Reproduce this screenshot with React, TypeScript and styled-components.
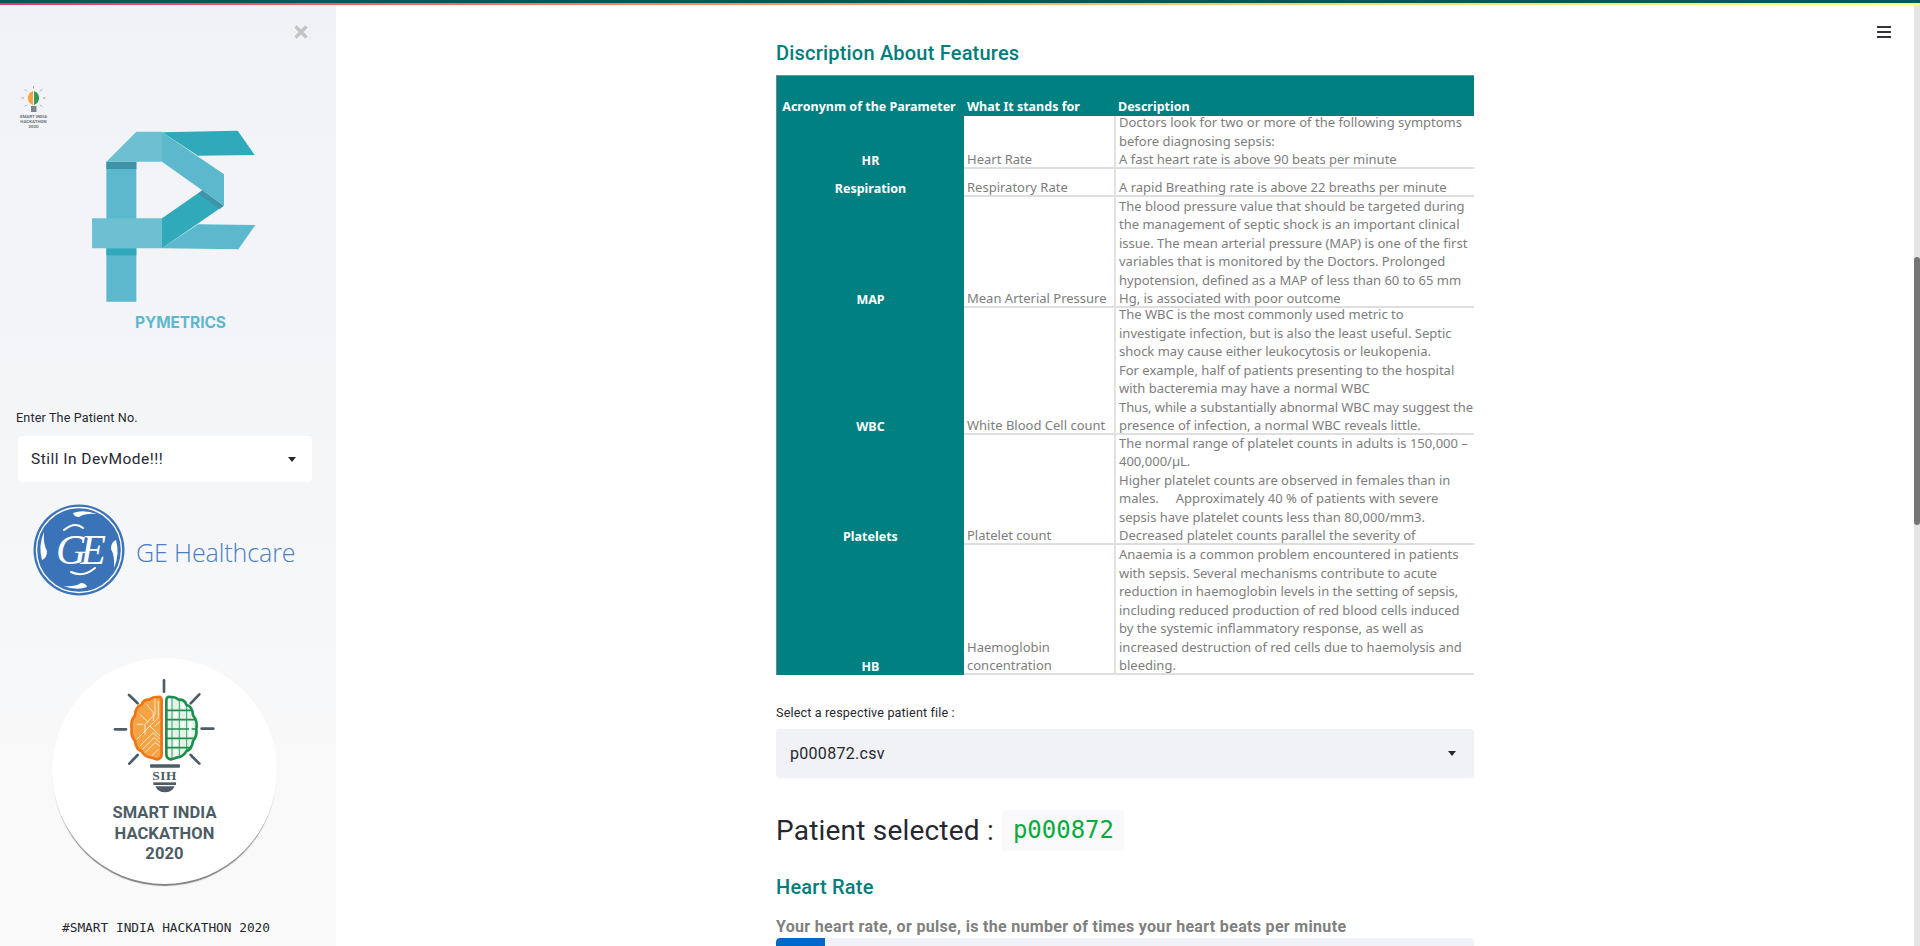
import React from 'react';
import styled, { createGlobalStyle } from 'styled-components';

const GlobalStyle = createGlobalStyle`
    html, body {
        margin:0;
        height:100%;
        overflow:hidden;
        background:#fff;
    }
    * {
        box-sizing:border-box;
    }
`;

const Page = styled.div`
    width:1920px;
    height:946px;
    display:flex;
    flex-direction:column;
    overflow:hidden;
    font-family:Roboto, sans-serif;
    color:#262730;
`;

const TopBand = styled.div`
    height:3px;
    flex:none;
    background:#0b5657;
`;

const Decoration = styled.div`
    height:2px;
    flex:none;
    background:linear-gradient(90deg, #f0306c, #ff8f6b 40%, #ffd37a 70%, #fffd80);
`;

const Body = styled.div`
    flex:1;
    min-height:0;
    display:flex;
`;

const Sidebar = styled.aside`
    position:relative;
    width:336px;
    flex:none;
    padding-top:80px;
    display:flex;
    flex-direction:column;
    background:linear-gradient(180deg, #f0f2f6, #fafafa);
`;

const CloseMark = styled.div`
    position:absolute;
    top:19px;
    right:27px;
    display:flex;
    color:#c4c4c4;
`;

const MiniLogo = styled.svg`
    display:block;
    width:30px;
    height:45px;
    margin-left:19px;
    flex:none;
`;

const BrandMark = styled.svg`
    display:block;
    width:163.4px;
    height:172px;
    margin-left:92px;
    flex:none;
`;

const BrandName = styled.div`
    margin-top:11px;
    padding-left:135px;
    font-family:Inter, sans-serif;
    font-size:15.5px;
    line-height:20px;
    font-weight:700;
    letter-spacing:-0.1px;
    color:#5fb8cc;
`;

const WidgetLabel = styled.div<{ $top?: number }>`
    margin-top:${p => p.$top ?? 0}px;
    font-size:12.6px;
    line-height:16px;
    letter-spacing:0.15px;
`;

const SideLabel = styled(WidgetLabel)`
    padding-left:16px;
`;

const SideSelect = styled.div`
    margin:10px 24px 0 18px;
    height:46px;
    padding:0 16px 0 13px;
    display:flex;
    align-items:center;
    justify-content:space-between;
    background:#fff;
    border-radius:4px;
    font-size:15.5px;
    letter-spacing:0.47px;
`;

const Caret = styled.span`
    width:0;
    height:0;
    border-left:4.5px solid transparent;
    border-right:4.5px solid transparent;
    border-top:5px solid #262730;
`;

const GeLogo = styled.div`
    margin:22px 0 0 33px;
    display:flex;
    align-items:center;
    gap:11px;
`;

const GeSeal = styled.svg`
    display:block;
    width:92px;
    height:92px;
    flex:none;
`;

const GeName = styled.div`
    margin-top:4px;
    font-family:'Open Sans', sans-serif;
    font-weight:300;
    font-size:25px;
    letter-spacing:-0.1px;
    color:#4a7fc1;
    white-space:nowrap;
`;

const HackBadge = styled.div`
    margin:62px 0 0 52px;
    width:225px;
    height:226px;
    padding-top:18px;
    display:flex;
    flex-direction:column;
    align-items:center;
    border-radius:50%;
    background:#fff;
    box-shadow:0 3px 1px -1px #808080;
`;

const BulbMark = styled.svg`
    display:block;
    width:110px;
    height:120px;
    flex:none;
`;

const BadgeText = styled.div`
    margin-top:7px;
    font-size:16.5px;
    line-height:20.5px;
    font-weight:700;
    letter-spacing:0.1px;
    text-align:center;
    color:#4d5c66;
`;

const SideCaption = styled.div`
    margin-top:36px;
    padding-left:62px;
    font-family:'DejaVu Sans Mono', monospace;
    font-size:12.8px;
    line-height:16px;
    white-space:nowrap;
`;

const MainArea = styled.main`
    position:relative;
    flex:1;
    min-width:0;
    overflow:hidden;
    display:flex;
    justify-content:center;
`;

const Burger = styled.div`
    position:absolute;
    top:21px;
    right:23px;
    width:14px;
    display:flex;
    flex-direction:column;
    gap:3px;
    span {
        display:block;
        height:2px;
        background:#33343e;
    }
`;

const Column = styled.div`
    width:698px;
    flex:none;
    padding-top:37px;
`;

const SectionTitle = styled.h3<{ $top?: number }>`
    margin:${p => p.$top ?? 0}px 0 0;
    font-size:20px;
    line-height:23px;
    font-weight:500;
    letter-spacing:0.2px;
    color:#007d7d;
`;

const FeatureTable = styled.div`
    margin-top:10px;
    border-top:1px solid #7f8f8f;
    font-family:'Noto Sans', sans-serif;
    font-size:13px;
    line-height:18.55px;
    color:#7d7d7d;
`;

const TableRow = styled.div<{ $height: number }>`
    height:${p => p.$height}px;
    display:grid;
    grid-template-columns:188px 150px 1fr;
    grid-template-rows:minmax(0, 1fr);
`;

const NameCell = styled.div<{ $head?: boolean }>`
    display:flex;
    align-items:flex-end;
    justify-content:center;
    overflow:hidden;
    padding-right:${p => (p.$head ? 3 : 0)}px;
    background:#008080;
    border-left:1px solid #5f8f8f;
    color:#fff;
    font-weight:700;
    font-size:12.5px;
    line-height:${p => (p.$head ? 18 : 16)}px;
    white-space:nowrap;
`;

const HeadCell = styled.div<{ $wide?: boolean }>`
    display:flex;
    align-items:flex-end;
    background:#008080;
    color:#fff;
    font-weight:700;
    font-size:12.5px;
    line-height:18px;
    padding-left:${p => (p.$wide ? 4 : 3)}px;
`;

const TextCell = styled.div<{ $wide?: boolean }>`
    display:flex;
    flex-direction:column;
    justify-content:flex-end;
    min-height:0;
    padding-left:3px;
    white-space:pre;
    box-shadow:inset 0 -2px #dedede;
    border-left:${p => (p.$wide ? '2px solid #e2e2e2' : 'none')};
`;

const Line = styled.div<{ $tight?: boolean }>`
    flex:none;
    letter-spacing:${p => (p.$tight ? '-0.1px' : 'normal')};
`;

const PlainSelect = styled.div`
    margin-top:8px;
    height:49px;
    padding:0 18px 0 14px;
    display:flex;
    align-items:center;
    justify-content:space-between;
    background:#f0f2f6;
    border-radius:4px;
    font-size:16px;
    letter-spacing:0.3px;
`;

const PatientLine = styled.div`
    margin-top:32px;
    display:flex;
    align-items:center;
    gap:8px;
    font-size:28px;
    line-height:41px;
    letter-spacing:0.2px;
`;

const PatientCode = styled.code`
    height:41px;
    padding:0 10px 0 11px;
    border-radius:4px;
    background:#f9f9fb;
    font-family:'DejaVu Sans Mono', monospace;
    font-size:24px;
    letter-spacing:0;
    color:#09ab3b;
`;

const MetricNote = styled.div`
    margin-top:17px;
    font-size:16px;
    line-height:22px;
    font-weight:700;
    letter-spacing:0.32px;
    color:#808080;
`;

const ProgressTrack = styled.div`
    height:20px;
    border-radius:4px;
    background:#f0f2f6;
    overflow:hidden;
`;

const ProgressFill = styled.div`
    height:100%;
    background:#0068c9;
    border-radius:4px 0 0 4px;
`;

const ScrollTrack = styled.div`
    width:6px;
    flex:none;
    padding-top:252px;
    background:#e6e6e6;
`;

const ScrollThumb = styled.div`
    height:268px;
    border-radius:3px;
    background:#757575;
`;

const rows = [
    {
        name: 'HR',
        height: 53,
        stands: ['Heart Rate'],
        lines: [
            'Doctors look for two or more of the following symptoms',
            'before diagnosing sepsis:',
            'A fast heart rate is above 90 beats per minute',
        ],
    },
    {
        name: 'Respiration',
        height: 28,
        stands: ['Respiratory Rate'],
        lines: ['A rapid Breathing rate is above 22 breaths per minute'],
    },
    {
        name: 'MAP',
        height: 111,
        stands: ['Mean Arterial Pressure'],
        lines: [
            'The blood pressure value that should be targeted during',
            'the management of septic shock is an important clinical',
            'issue. The mean arterial pressure (MAP) is one of the first',
            'variables that is monitored by the Doctors. Prolonged',
            'hypotension, defined as a MAP of less than 60 to 65 mm',
            'Hg, is associated with poor outcome',
        ],
    },
    {
        name: 'WBC',
        height: 127,
        stands: ['White Blood Cell count'],
        lines: [
            'The WBC is the most commonly used metric to',
            'investigate infection, but is also the least useful. Septic',
            'shock may cause either leukocytosis or leukopenia.',
            'For example, half of patients presenting to the hospital',
            'with bacteremia may have a normal WBC',
            'Thus, while a substantially abnormal WBC may suggest the',
            'presence of infection, a normal WBC reveals little.',
        ],
    },
    {
        name: 'Platelets',
        height: 110,
        stands: ['Platelet count'],
        lines: [
            'The normal range of platelet counts in adults is 150,000 –',
            '400,000/µL.',
            'Higher platelet counts are observed in females than in',
            'males.     Approximately 40 % of patients with severe',
            'sepsis have platelet counts less than 80,000/mm3.',
            'Decreased platelet counts parallel the severity of',
        ],
    },
    {
        name: 'HB',
        height: 130,
        stands: ['Haemoglobin', 'concentration'],
        lines: [
            'Anaemia is a common problem encountered in patients',
            'with sepsis. Several mechanisms contribute to acute',
            'reduction in haemoglobin levels in the setting of sepsis,',
            'including reduced production of red blood cells induced',
            'by the systemic inflammatory response, as well as',
            'increased destruction of red cells due to haemolysis and',
            'bleeding.',
        ],
    },
];

const rays = [
    [222, 28, 222, 62],
    [117, 72, 143, 97],
    [75, 175, 108, 175],
    [118, 278, 143, 252],
    [328, 70, 302, 97],
    [370, 173, 335, 173],
    [328, 278, 302, 252],
];

const brainLeft =
    'M215 88 Q215 76 203 78 Q188 77 178 86 Q160 85 155 101 Q136 106 135 133 Q120 150 125 175 Q122 195 135 210 Q138 235 155 241 Q165 258 185 260 Q200 268 208 263 Q215 259 215 250 Z';

const BulbArt: React.FC = () => (
    <BulbMark viewBox="60 15 330 360">
        <defs>
            <clipPath id="leftLobe">
                <path d={brainLeft} />
            </clipPath>
            <clipPath id="rightLobe">
                <path d={brainLeft} transform="matrix(-1 0 0 1 444 0)" />
            </clipPath>
        </defs>
        {rays.map((r, i) => (
            <line key={i} x1={r[0]} y1={r[1]} x2={r[2]} y2={r[3]} stroke="#4d5c66" strokeWidth="8" strokeLinecap="round" />
        ))}
        <path d={brainLeft} fill="#f5a445" />
        <g clipPath="url(#leftLobe)" stroke="#fff" strokeWidth="2.2" fill="none">
            <path d="M195 80 V130 L165 160 V190" />
            <path d="M205 90 V140 L150 195" />
            <path d="M170 100 L190 125 V150" />
            <path d="M150 130 L175 155" />
            <path d="M140 205 L180 165 L210 195" />
            <path d="M150 225 L190 185 L210 205" />
            <path d="M165 245 L195 215 L210 225" />
            <path d="M158 235 L192 200 L210 215" />
            <path d="M185 255 L205 235" />
            <path d="M140 160 H160" />
            <path d="M195 165 L212 150" />
        </g>
        <path d={brainLeft} fill="none" stroke="#ee7414" strokeWidth="8" />
        <path d={brainLeft} transform="matrix(-1 0 0 1 444 0)" fill="#e4f3e9" />
        <g clipPath="url(#rightLobe)" stroke="#1c8f4c" fill="none">
            <path strokeWidth="5" d="M225 118 H320 M225 146 H320 M225 174 H320 M225 202 H320 M225 230 H320" />
            <path strokeWidth="2.5" d="M246 70 V270 M268 70 V270 M290 70 V270" />
            <path stroke="#fff" strokeWidth="7" d="M236 82 V112 M257 124 V140 M279 152 V168 M236 180 V196 M257 208 V224 M279 96 V112 M301 152 V196 M236 238 V262 M257 238 V262" />
        </g>
        <path d={brainLeft} transform="matrix(-1 0 0 1 444 0)" fill="none" stroke="#1c8f4c" strokeWidth="8" />
        <rect x="180" y="280" width="90" height="10" rx="3" fill="#4d5c66" />
        <text x="224" y="328" textAnchor="middle" fontFamily="'Liberation Serif', serif" fontWeight="700" fontSize="40" letterSpacing="2" fill="#4d5c66">SIH</text>
        <rect x="190" y="334" width="68" height="8" fill="#4d5c66" />
        <path d="M196 346 H254 Q246 364 225 364 Q204 364 196 346 Z" fill="#4d5c66" />
    </BulbMark>
);

const App: React.FC = () => {
    return (
        <Page>
            <GlobalStyle />
            <TopBand />
            <Decoration />
            <Body>
                <Sidebar>
                    <CloseMark>
                        <svg width="16" height="16" viewBox="0 0 16 16">
                            <path d="M2.5 2.5 L13.5 13.5 M13.5 2.5 L2.5 13.5" stroke="currentColor" strokeWidth="3.4" />
                        </svg>
                    </CloseMark>
                    <MiniLogo viewBox="0 0 30 45">
                        {[0, 45, 90, 135, 225, 270, 315, 180].map(a => (
                            <line key={a} x1="14.5" y1="1" x2="14.5" y2="3.5" stroke="#8a9499" strokeWidth="0.9" transform={`rotate(${a} 14.5 13)`} />
                        ))}
                        <path d="M14 6 A8 7.5 0 0 0 14 20 Z" fill="#f5a33f" />
                        <path d="M15 6 A8 7.5 0 0 1 15 20 Z" fill="#2f9a55" />
                        <rect x="12" y="21" width="5.5" height="6" fill="#7a868c" />
                        <text x="14.5" y="33" textAnchor="middle" fontFamily="Roboto, sans-serif" fontSize="4.4" fontWeight="700" fill="#6a747a">SMART INDIA</text>
                        <text x="14.5" y="38" textAnchor="middle" fontFamily="Roboto, sans-serif" fontSize="4.4" fontWeight="700" fill="#6a747a">HACKATHON</text>
                        <text x="14.5" y="43" textAnchor="middle" fontFamily="Roboto, sans-serif" fontSize="4.4" fontWeight="700" fill="#6a747a">2020</text>
                    </MiniLogo>
                    <BrandMark viewBox="277 390 490 516">
                        <polygon points="487,397 714,392 765,465 595,467" fill="#30a9ba" />
                        <polygon points="595,673 767,675 716,748 487,745" fill="#5cb9cd" />
                        <polygon points="320,485 410,485 410,905 320,905" fill="#5cb9cd" />
                        <polygon points="320,485 410,485 410,507 320,507" fill="#3f93a7" />
                        <polygon points="320,745 410,745 410,766 320,766" fill="#30a9ba" />
                        <polygon points="487,655 608,571 672,617 487,745" fill="#30a9ba" />
                        <polygon points="608,571 672,617 660,627 596,581" fill="#3f93a7" />
                        <polygon points="487,397 673,523 673,617 487,485" fill="#5cb9cd" />
                        <polygon points="410,395 487,395 487,485 320,485" fill="#6cc0d2" />
                        <polygon points="277,655 487,655 487,745 277,745" fill="#6cc0d2" />
                    </BrandMark>
                    <BrandName>PYMETRICS</BrandName>
                    <SideLabel $top={77}>Enter The Patient No.</SideLabel>
                    <SideSelect>
                        Still In DevMode!!!
                        <Caret />
                    </SideSelect>
                    <GeLogo>
                        <GeSeal viewBox="0 0 92 92">
                            <circle cx="46" cy="46" r="45.5" fill="#3b73b9" />
                            <circle cx="46" cy="46" r="42.5" fill="none" stroke="#fff" strokeWidth="1.4" />
                            <path d="M40 9 Q50 5 64 10 Q52 9 46 13 Q41 13 40 9 Z" fill="#fff" />
                            <path d="M83 36 Q87 50 81 64 Q82 52 78 45 Q78 38 83 36 Z" fill="#fff" />
                            <path d="M54 83 Q44 87 30 82 Q42 83 48 79 Q53 79 54 83 Z" fill="#fff" />
                            <path d="M9 56 Q5 42 11 28 Q10 40 14 47 Q14 54 9 56 Z" fill="#fff" />
                            <text x="45" y="60" textAnchor="middle" fontFamily="'Liberation Serif', serif" fontStyle="italic" fontSize="42" letterSpacing="-6" fill="#fff">GE</text>
                            <path d="M31 26 Q42 17 50 24" fill="none" stroke="#fff" strokeWidth="2" strokeLinecap="round" />
                            <path d="M38 68 Q50 74 62 64" fill="none" stroke="#fff" strokeWidth="2" strokeLinecap="round" />
                        </GeSeal>
                        <GeName>GE Healthcare</GeName>
                    </GeLogo>
                    <HackBadge>
                        <BulbArt />
                        <BadgeText>
                            SMART INDIA
                            <br />
                            HACKATHON
                            <br />
                            2020
                        </BadgeText>
                    </HackBadge>
                    <SideCaption>#SMART INDIA HACKATHON 2020</SideCaption>
                </Sidebar>
                <MainArea>
                    <Burger>
                        <span />
                        <span />
                        <span />
                    </Burger>
                    <Column>
                        <SectionTitle>Discription About Features</SectionTitle>
                        <FeatureTable>
                            <TableRow $height={40}>
                                <NameCell $head>Acronynm of the Parameter</NameCell>
                                <HeadCell>What It stands for</HeadCell>
                                <HeadCell $wide>Description</HeadCell>
                            </TableRow>
                            {rows.map(row => (
                                <TableRow key={row.name} $height={row.height}>
                                    <NameCell>{row.name}</NameCell>
                                    <TextCell>
                                        {row.stands.map(s => (
                                            <Line key={s}>{s}</Line>
                                        ))}
                                    </TextCell>
                                    <TextCell $wide>
                                        {row.lines.map(l => (
                                            <Line key={l} $tight={l.startsWith('Thus')}>{l}</Line>
                                        ))}
                                    </TextCell>
                                </TableRow>
                            ))}
                        </FeatureTable>
                        <WidgetLabel $top={30}>Select a respective patient file :</WidgetLabel>
                        <PlainSelect>
                            p000872.csv
                            <Caret />
                        </PlainSelect>
                        <PatientLine>
                            Patient selected :
                            <PatientCode>p000872</PatientCode>
                        </PatientLine>
                        <SectionTitle $top={25}>Heart Rate</SectionTitle>
                        <MetricNote>Your heart rate, or pulse, is the number of times your heart beats per minute</MetricNote>
                        <ProgressTrack>
                            <ProgressFill style={{ width: '7%' }} />
                        </ProgressTrack>
                    </Column>
                </MainArea>
                <ScrollTrack>
                    <ScrollThumb />
                </ScrollTrack>
            </Body>
        </Page>
    );
};

export default App;
